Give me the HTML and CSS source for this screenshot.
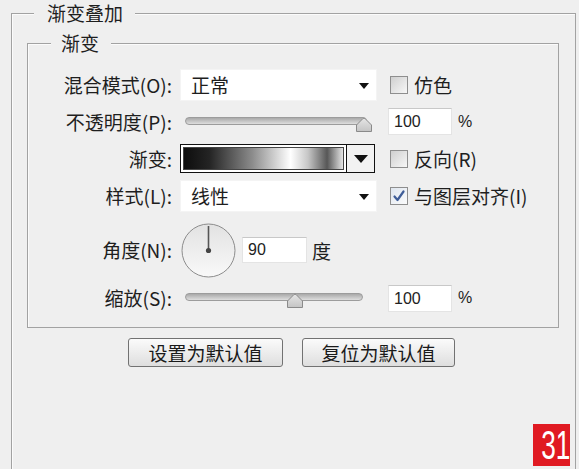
FILE: index.html
```html
<!DOCTYPE html>
<html>

<head>
    <link rel="stylesheet" href="styles.css">
</head>

<body>

    <div class="panel">
        <span class="panel-title">渐变叠加</span>

        <div class="group">
            <span class="group-title">渐变</span>

            <div class="row">
                <span class="lbl">混合模式(O):</span>
                <div class="select">正常<i class="caret"></i></div>
                <span class="check"><span class="box"></span>仿色</span>
            </div>

            <div class="row">
                <span class="lbl">不透明度(P):</span>
                <div class="slider">
                    <div class="track"></div>
                    <svg class="thumb thumb-end" width="18" height="15" viewBox="0 0 18 15">
                        <defs>
                            <linearGradient id="tg" x1="0" y1="0" x2="0" y2="1">
                                <stop offset="0" stop-color="#e6e6e6"/>
                                <stop offset="1" stop-color="#c4c4c4"/>
                            </linearGradient>
                        </defs>
                        <path d="M1.5 14.5 L1.5 8 L8 1.5 Q9 0.7 10 1.5 L16.5 8 L16.5 14.5 Z" fill="url(#tg)" stroke="#8a8a8a"/>
                    </svg>
                </div>
                <div class="field">100</div>
                <span class="unit">%</span>
            </div>

            <div class="row">
                <span class="lbl">渐变:</span>
                <div class="grad">
                    <div class="grad-bar"><div class="grad-fill"></div></div>
                    <div class="grad-btn"><i class="caret big"></i></div>
                </div>
                <span class="check check-wide"><span class="box"></span>反向(R)</span>
            </div>

            <div class="row">
                <span class="lbl">样式(L):</span>
                <div class="select">线性<i class="caret"></i></div>
                <span class="check"><span class="box checked">
                    <svg width="14" height="14" viewBox="0 0 14 14">
                        <path d="M2.5 7.5 L5.5 11 L11.5 2.5" fill="none" stroke="#3f5d98" stroke-width="2.2" stroke-linecap="round" stroke-linejoin="round"/>
                    </svg>
                </span>与图层对齐(I)</span>
            </div>

            <div class="row row-dial">
                <span class="lbl">角度(N):</span>
                <svg class="dial" width="55" height="55" viewBox="0 0 55 55">
                    <defs>
                        <linearGradient id="dg" x1="0" y1="0" x2="0" y2="1">
                            <stop offset="0" stop-color="#e2e2e2"/>
                            <stop offset="1" stop-color="#f9f9f9"/>
                        </linearGradient>
                    </defs>
                    <circle cx="27.5" cy="27.5" r="26.5" fill="url(#dg)" stroke="#8c8c8c"/>
                    <line x1="27.5" y1="27.5" x2="27.5" y2="3" stroke="#555" stroke-width="1.6"/>
                    <circle cx="27.5" cy="27.5" r="2.6" fill="#444"/>
                </svg>
                <div class="field field-angle">90</div>
                <span class="deg">度</span>
            </div>

            <div class="row row-last">
                <span class="lbl">缩放(S):</span>
                <div class="slider">
                    <div class="track track-short"></div>
                    <svg class="thumb thumb-mid" width="18" height="15" viewBox="0 0 18 15">
                        <path d="M1.5 14.5 L1.5 8 L8 1.5 Q9 0.7 10 1.5 L16.5 8 L16.5 14.5 Z" fill="url(#tg)" stroke="#8a8a8a"/>
                    </svg>
                </div>
                <div class="field">100</div>
                <span class="unit">%</span>
            </div>
        </div>

        <div class="buttons">
            <button class="btn btn-set">设置为默认值</button>
            <button class="btn btn-reset">复位为默认值</button>
        </div>
    </div>

    <div class="badge"><span class="badge-num">31</span></div>

</body>

</html>
```

FILE: styles.css
```css
html, body {
    margin: 0;
    height: 100%;
    overflow: hidden;
}

body {
    background-color: #efefef;
    font-family: "Noto Sans CJK SC", "Liberation Sans", sans-serif;
    color: #1e1e1e;
    position: relative;
}

.panel {
    position: relative;
    box-sizing: border-box;
    margin: 13px 0 0 11px;
    width: 565px;
    height: 456px;
    padding: 29px 16px 0 15px;
    border: 1px solid #a2a2a2;
    border-bottom: none;
    box-shadow: inset 1px 1px 0 #fbfbfb;
}

.panel-title,
.group-title {
    position: absolute;
    top: -11px;
    background-color: #efefef;
    font-size: 19px;
    line-height: 20px;
}

.panel-title {
    left: 22px;
    padding: 0 12px 0 13px;
}

.group-title {
    left: 23px;
    padding: 0 12px 0 10px;
}

.group {
    position: relative;
    box-sizing: border-box;
    height: 285px;
    padding-top: 22px;
    border: 1px solid #a2a2a2;
    box-shadow: inset 1px 1px 0 #fbfbfb;
}

.row {
    display: flex;
    align-items: center;
    height: 37px;
}

.row-dial {
    height: 72px;
}

.row-last {
    height: 24px;
}

.lbl {
    width: 144px;
    margin-right: 8px;
    text-align: right;
    font-size: 19px;
    line-height: 22px;
    white-space: nowrap;
}

.select {
    position: relative;
    box-sizing: border-box;
    width: 197px;
    height: 32px;
    padding-left: 10px;
    background-color: #fff;
    border: 1px solid #f4f4f4;
    font-size: 19px;
    line-height: 30px;
}

.caret {
    position: absolute;
    right: 7px;
    top: 13px;
    width: 0;
    height: 0;
    border-left: 5px solid transparent;
    border-right: 5px solid transparent;
    border-top: 6px solid #111;
}

.caret.big {
    position: static;
    border-left-width: 7px;
    border-right-width: 7px;
    border-top-width: 8px;
}

.check {
    display: flex;
    align-items: center;
    margin-left: 13px;
    font-size: 19px;
    line-height: 22px;
    white-space: nowrap;
}

.check-wide {
    margin-left: 15px;
}

.box {
    box-sizing: border-box;
    width: 18px;
    height: 18px;
    margin-right: 6px;
    border: 1px solid #8e8e8e;
    background: linear-gradient(135deg, #cfcfcf, #f7f7f7);
    display: flex;
    align-items: center;
    justify-content: center;
}

.box.checked {
    background: linear-gradient(135deg, #dfe6ef, #fbfbfb);
}

.slider {
    position: relative;
    width: 197px;
    height: 20px;
}

.track {
    position: absolute;
    left: 5px;
    top: 5px;
    box-sizing: border-box;
    width: 182px;
    height: 8px;
    border-radius: 4px;
    border: 1px solid #9c9c9c;
    background: linear-gradient(#a9a9a9, #dedede);
}

.track-short {
    width: 178px;
}

.thumb {
    position: absolute;
    top: 5px;
}

.thumb-end {
    left: 175px;
}

.thumb-mid {
    left: 106px;
}

.field {
    box-sizing: border-box;
    width: 64px;
    height: 27px;
    margin-left: 11px;
    padding-left: 5px;
    background-color: #fff;
    border: 1px solid #e4e4e4;
    border-top-color: #c8c8c8;
    font-family: "Liberation Sans", sans-serif;
    font-size: 16px;
    line-height: 25px;
    color: #222;
}

.field-angle {
    width: 65px;
    height: 26px;
    margin-left: 6px;
    line-height: 24px;
}

.unit {
    margin-left: 6px;
    font-family: "Liberation Sans", sans-serif;
    font-size: 16px;
}

.deg {
    margin-left: 5px;
    font-size: 19px;
}

.dial {
    margin-left: 1px;
}

.grad {
    display: flex;
    box-sizing: border-box;
    width: 195px;
    height: 29px;
    border: 1px solid #111;
    background-color: #fff;
}

.grad-bar {
    flex: 1;
    padding: 2px;
}

.grad-fill {
    height: 100%;
    box-sizing: border-box;
    border: 1px solid #444;
    background: linear-gradient(to right, #0d0d0d 0%, #242424 16%, #8c8c8c 43%, #ffffff 67%, #c6c6c6 78%, #575757 90%, #e6e6e6 100%);
}

.grad-btn {
    width: 27px;
    border-left: 1px solid #111;
    background-color: #f2f2f2;
    display: flex;
    align-items: center;
    justify-content: center;
}

.buttons {
    display: flex;
    justify-content: center;
    gap: 19px;
    margin-top: 10px;
    padding-right: 3px;
}

.btn {
    box-sizing: border-box;
    height: 29px;
    padding: 0;
    border: 1px solid #727272;
    border-radius: 3px;
    background: linear-gradient(#fbfbfb, #dedede);
    font-family: "Noto Sans CJK SC", sans-serif;
    font-size: 19px;
    line-height: 26px;
    color: #1a1a1a;
}

.btn-set {
    width: 155px;
}

.btn-reset {
    width: 153px;
}

.badge {
    position: absolute;
    left: 533px;
    top: 424px;
    width: 37px;
    height: 42px;
    background-color: #e01a22;
    color: #fff;
    text-align: center;
    font-family: "Liberation Sans", sans-serif;
    font-size: 41px;
    line-height: 42px;
}

.badge-num {
    display: inline-block;
    transform: scaleX(0.64);
}
```
